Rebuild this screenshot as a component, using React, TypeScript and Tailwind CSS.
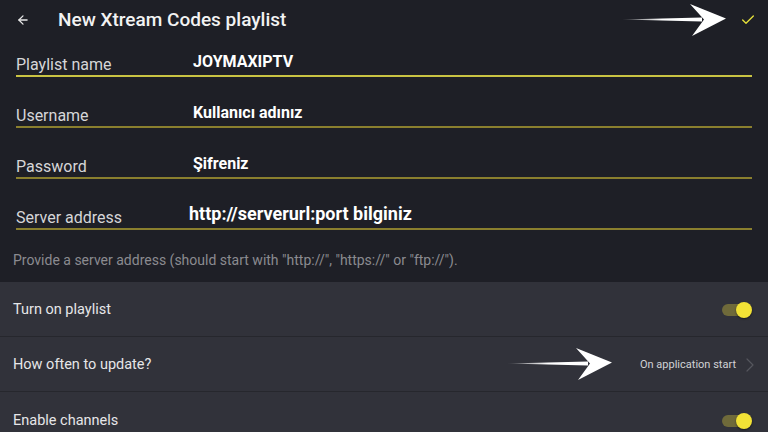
import { ArrowLeft, Check, ChevronRight } from "lucide-react";

const fields = [
  { label: "Playlist name", value: "JOYMAXIPTV", active: true },
  { label: "Username", value: "Kullanıcı adınız" },
  { label: "Password", value: "Şifreniz" },
  { label: "Server address", value: "http://serverurl:port bilginiz", big: true },
];

function Pointer({ className }: { className: string }) {
  // white hand-drawn style arrow pasted over the screenshot
  return (
    <svg className={className} viewBox="0 0 104 34" fill="none">
      <defs>
        <linearGradient id="shaft" x1="0" x2="1" y1="0" y2="0">
          <stop offset="0" stopColor="#fff" stopOpacity="0.2" />
          <stop offset="0.5" stopColor="#fff" />
          <stop offset="1" stopColor="#fff" />
        </linearGradient>
      </defs>
      <path d="M0 16.6 L80 14.5 L80 18.5 Z" fill="url(#shaft)" />
      <path d="M68 1 L104 15.5 L70 33 L82 16.5 Z" fill="#fff" />
    </svg>
  );
}

function Toggle() {
  return (
    <div className="relative h-4 w-[30px]">
      <div className="absolute left-0 top-[2px] h-3 w-6 rounded-full bg-[#6f6a3a]" />
      <div className="absolute right-0 top-0 h-4 w-4 rounded-full bg-[#f2e236] shadow-[0_1px_2px_rgba(0,0,0,0.5)]" />
    </div>
  );
}

function App() {
  return (
    <div className="relative h-[432px] w-[768px] overflow-hidden bg-[#1e1f26] font-['Roboto',sans-serif]">
      <header className="flex h-10 items-center pl-4 pr-[12px]">
        <ArrowLeft className="h-[14px] w-[14px] text-[#e8e8e8]" strokeWidth={2.2} />
        <h1 className="ml-[28px] text-[19px] font-medium text-[#f2f2f2]">New Xtream Codes playlist</h1>
        <Check className="ml-auto h-[16px] w-[16px] text-[#e5e03a]" strokeWidth={2} />
      </header>

      <div className="px-4">
        {fields.map((f, i) => (
          <div
            key={f.label}
            className={`flex items-end border-b-2 ${i === 0 ? "h-[37px] border-[#c9c343]" : "h-[51px] border-[#8a7f2e]"}`}
          >
            <span className="mb-px w-[177px] text-[16px] leading-[18px] text-[#d6d6d8]">{f.label}</span>
            <span
              className={`font-bold leading-[18px] text-white ${f.big ? "mb-[5px] -ml-1 text-[18px]" : "mb-1 text-[16px]"}`}
            >
              {f.value}
            </span>
          </div>
        ))}
      </div>

      <p className="mt-[21px] px-[13px] text-[14px] leading-[18px] text-[#8b8b90]">
        Provide a server address (should start with "http://", "https://" or "ftp://").
      </p>

      <div className="mt-[13px] bg-[#31323a]">
        <div className="flex h-[55px] items-center justify-between border-b border-[#26272d] pl-[13px] pr-4 pt-[2px]">
          <span className="text-[14.5px] text-[#e6e6e8]">Turn on playlist</span>
          <Toggle />
        </div>
        <div className="flex h-[55px] items-center justify-between border-b border-[#26272d] pl-[13px] pr-[6px] pt-[2px]">
          <span className="text-[14.5px] text-[#e6e6e8]">How often to update?</span>
          <div className="flex items-center gap-[2px]">
            <span className="text-[11px] text-[#d2d2d6]">On application start</span>
            <ChevronRight className="h-6 w-6 text-[#55565d]" strokeWidth={1.2} />
          </div>
        </div>
        <div className="flex h-[55px] items-center justify-between pl-[13px] pr-4 pt-[2px]">
          <span className="text-[14.5px] text-[#e6e6e8]">Enable channels</span>
          <Toggle />
        </div>
      </div>

      <Pointer className="absolute left-[622px] top-[3px] h-[34px] w-[104px]" />
      <Pointer className="absolute left-[508px] top-[347px] h-[34px] w-[104px]" />
    </div>
  );
}

export default App;
